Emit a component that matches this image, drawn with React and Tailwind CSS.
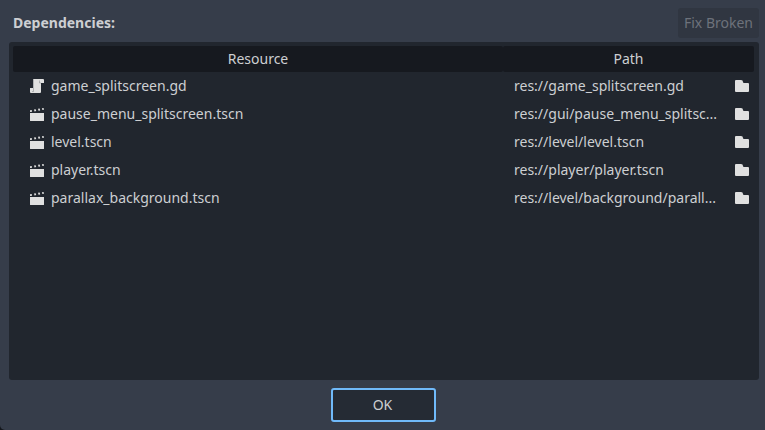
const rows = [
  ["game_splitscreen.gd", "res://game_splitscreen.gd", "script"],
  ["pause_menu_splitscreen.tscn", "res://gui/pause_menu_splitsc...", "scene"],
  ["level.tscn", "res://level/level.tscn", "scene"],
  ["player.tscn", "res://player/player.tscn", "scene"],
  ["parallax_background.tscn", "res://level/background/parall...", "scene"],
];

function ScriptIcon() {
  return (
    <svg width="16" height="16" viewBox="0 0 16 16" fill="#e0e0e0">
      <path d="M5 1a1 1 0 0 0-1 1v8H1v4a1 1 0 0 0 1 1h9a1 1 0 0 0 1-1V5h3V2a1 1 0 0 0-1-1z" />
      <path d="M4.500 2v11.500H3M12 5h-1.500V2.500" fill="none" stroke="#21262e" strokeOpacity=".25" strokeWidth="1" />
    </svg>
  );
}

function SceneIcon() {
  return (
    <svg width="16" height="16" viewBox="0 0 16 16" fill="#e0e0e0">
      <path d="M1 4.200l1.700-.3.400 1.800-2.100.3zM5 3.500l1.700-.3.500 1.900-1.700.3zM9 2.800l1.700-.3.500 1.900-1.700.3zM12.900 2.200l1.700-.3.400 1.900-1.600.3z" />
      <path d="M1 7h14v7.500a.5.5 0 0 1-.5.5h-13a.5.5 0 0 1-.5-.5z" />
    </svg>
  );
}

function FolderIcon() {
  return (
    <svg width="16" height="16" viewBox="0 0 16 16" fill="#e0e0e0">
      <path d="M2 2a1 1 0 0 0-1 1v10a1 1 0 0 0 1 1h12a1 1 0 0 0 1-1V6a1 1 0 0 0-1-1h-4a1 1 0 0 1-1-1 2 2 0 0 0-2-2z" />
    </svg>
  );
}

export default function App() {
  return (
    <div className="bg-[#14171c]">
      <div className="flex h-[430px] w-[765px] flex-col rounded-bl-[5px] bg-[#363d4a] pt-2 pr-1.5 pb-2 pl-[9px] font-['Noto_Sans',sans-serif] text-[14px] leading-5 text-[#cdcfd2]">
        <div className="flex h-[30px] items-center justify-between">
          <span className="pl-1 font-bold">Dependencies:</span>
          <button className="h-[30px] w-[81px] rounded-[3px] bg-[#303641] text-[#6d727b]">Fix Broken</button>
        </div>
        <div className="mt-1 h-[338px] rounded-[3px] bg-[#21262e] py-1 pr-[5px] pl-1">
          <div className="flex h-[26px] items-center text-center leading-[26px]">
            <span className="w-[490px] rounded-[2px] bg-[#16191f]">Resource</span>
            <span className="flex-1 rounded-[2px] bg-[#16191f]">Path</span>
          </div>
          {rows.map(([name, path, kind]) => (
            <div key={name} className="flex h-7 items-center">
              <div className="flex w-[501px] items-center gap-[6px] pl-4">
                {kind === "script" ? <ScriptIcon /> : <SceneIcon />}
                <span>{name}</span>
              </div>
              <span className="w-[220px]">{path}</span>
              <FolderIcon />
            </div>
          ))}
        </div>
        <div className="mt-2 mr-px flex justify-center">
          <button className="h-[34px] w-[105px] rounded-[3px] border-2 border-[#70bafa] bg-[#252b34] pr-[2px]">OK</button>
        </div>
      </div>
    </div>
  );
}
